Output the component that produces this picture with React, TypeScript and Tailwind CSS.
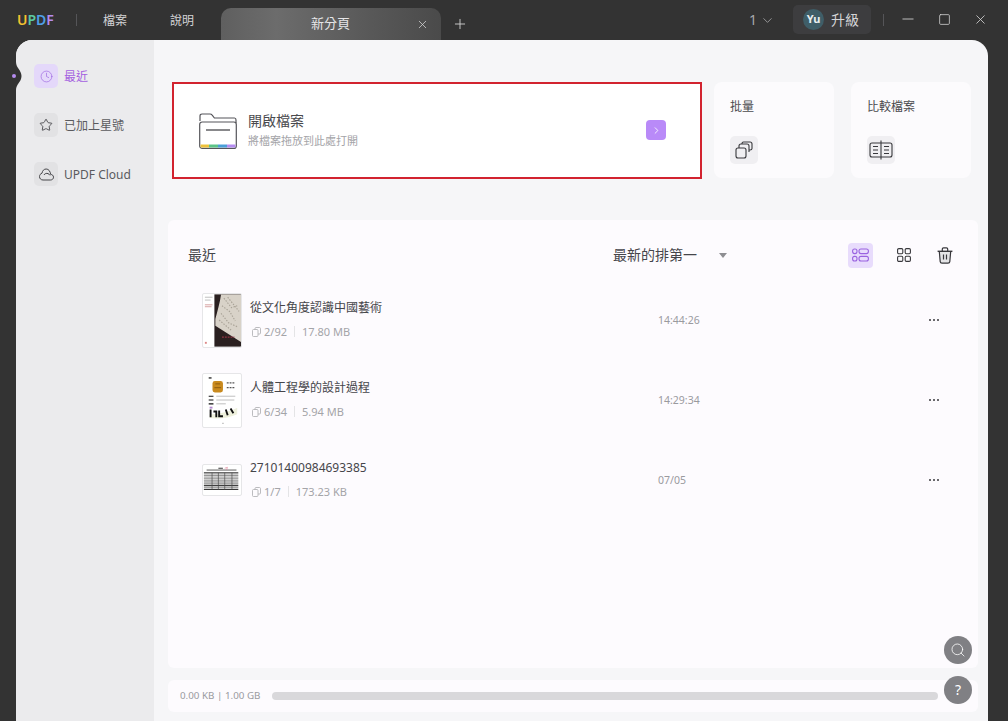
import React from "react";
import { Clock, Star, X, Plus, ChevronDown, Minus, Square, ChevronRight, Search } from "lucide-react";

const files = [
  { name: "從文化角度認識中國藝術", pages: "2/92", size: "17.80 MB", time: "14:44:26", thumb: "art" },
  { name: "人體工程學的設計過程", pages: "6/34", size: "5.94 MB", time: "14:29:34", thumb: "book" },
  { name: "27101400984693385", pages: "1/7", size: "173.23 KB", time: "07/05", thumb: "table" },
];

function ArtThumb() {
  return (
    <svg width="40" height="55" viewBox="0 0 40 55" className="rounded-[2px] border border-[#e6e6e8] bg-white">
      <rect x="12" y="0" width="28" height="55" fill="#2a2020" />
      <path d="M19 0H40V50L13 33V26C15 18 18 8 19 0Z" fill="#d8d2c8" />
      <path d="M22 4L30 14L36 12M20 12L28 18L34 28M26 3L38 18M19 20L27 30L36 34M17 27L30 38" stroke="#a8a296" strokeWidth="1.2" strokeDasharray="1.5 1.5" fill="none" />
      <path d="M20 45H33" stroke="#8e3340" strokeWidth="1.5" strokeDasharray="2 1" />
      <path d="M2 3H10M2 6H8" stroke="#aaa" strokeWidth="0.8" />
      <path d="M2 11H10M2 13H9" stroke="#c88" strokeWidth="0.8" />
      <rect x="2" y="50" width="2" height="2" fill="#d88" />
    </svg>
  );
}

function BookThumb() {
  return (
    <svg width="40" height="55" viewBox="0 0 40 55" className="rounded-[2px] border border-[#e6e6e8] bg-white">
      <rect x="6" y="3" width="3" height="1.5" fill="#333" />
      <rect x="10" y="7" width="11" height="12" rx="2.5" fill="#c98a1e" />
      <path d="M13 10H18M12 14H19" stroke="#8a5a10" strokeWidth="1" />
      <path d="M25 9H34M25 14H34" stroke="#555" strokeWidth="1.4" strokeDasharray="2 1" />
      <path d="M6 23H11M6 27H11M6 31H11" stroke="#111" strokeWidth="1.2" />
      <path d="M14 23H34M14 27H33M14 31H24" stroke="#aaa" strokeWidth="0.8" />
      <path d="M7 42C16 42 28 39 36 35V42C28 46 16 47 7 46Z" fill="#eef0dc" />
      <path d="M8 37V45M11 39H14V45M17 38V44H21M24 37L26 43M29 36L32 41" stroke="#111" strokeWidth="2" fill="none" />
      <rect x="7" y="34" width="3" height="2" fill="#b48ad0" />
      <rect x="20" y="51" width="2" height="1" fill="#bbb" />
    </svg>
  );
}

function TableThumb() {
  return (
    <svg width="42" height="32" viewBox="0 0 42 32" className="rounded-[2px] border border-[#e6e6e8] bg-white">
      <path d="M4 5H37" stroke="#222" strokeWidth="0.8" />
      <path d="M17 3H22" stroke="#222" strokeWidth="1" />
      <path d="M24 3L27 2L26 5" stroke="#e08aa0" strokeWidth="0.8" fill="none" />
      <rect x="1" y="8" width="38" height="19" fill="#cfcfcf" />
      <path d="M1 8H39M1 26.5H39M1 22H39" stroke="#111" strokeWidth="0.9" />
      <path d="M1 11H39M1 14H39M1 17H39M1 19.5H39M1 24H39" stroke="#666" strokeWidth="0.6" />
      <path d="M10 8V27M17 8V27M24 8V27M32 8V27" stroke="#444" strokeWidth="0.7" />
    </svg>
  );
}

function FolderIcon() {
  return (
    <svg width="38" height="36" viewBox="0 0 38 36" fill="none" stroke="#55555a" strokeWidth="1.2">
      <path d="M1 8V3C1 1.6 1.8 1 3 1H11C12 1 12.6 1.4 13.2 2.2L15.4 5H35.5C36.6 5 37 5.8 37 7V10" />
      <rect x="0.7" y="9" width="36.6" height="26.4" rx="2.5" />
      <path d="M7 17H31" stroke="#55555a" strokeWidth="1.4" />
      <path d="M1.5 33H10" stroke="#eec23c" strokeWidth="3" />
      <path d="M10 33H19" stroke="#5cc488" strokeWidth="3" />
      <path d="M19 33H28" stroke="#4a9fd8" strokeWidth="3" />
      <path d="M28 33H36.5" stroke="#b58cf0" strokeWidth="3" />
    </svg>
  );
}

function PagesIcon() {
  return (
    <svg width="9" height="10" viewBox="0 0 9 10" fill="none" stroke="#b4b4b8" strokeWidth="0.9">
      <rect x="0.5" y="2.5" width="5.5" height="7" rx="1" />
      <path d="M3 2.5V1.5C3 1 3.3.5 4 .5H7.5C8.1.5 8.5 1 8.5 1.5V6C8.5 6.7 8.1 7 7.5 7H6" />
    </svg>
  );
}

function CloudIcon() {
  return (
    <svg width="15" height="13" viewBox="0 0 15 13" fill="none" stroke="#444448" strokeWidth="1">
      <path d="M4 12H11.5C13.2 12 14.5 10.8 14.5 9.2C14.5 7.6 13.2 6.4 11.6 6.4C11.4 3.4 9.6 1 7.2 1C5 1 3.4 2.6 3 5.2C1.5 5.6.5 7 .5 8.6C.5 10.6 2 12 4 12Z" />
      <path d="M5 7C5.6 5.6 7.6 5 9 5.6C10 6 10.6 6.6 11 7.4" />
    </svg>
  );
}

export default function App() {
  return (
    <div
      className="flex h-[721px] w-[1008px] flex-col overflow-hidden bg-[#333333]"
      style={{ fontFamily: '"Noto Sans", "Noto Sans CJK TC", sans-serif' }}
    >
      {/* title bar */}
      <header className="flex h-10 shrink-0 items-start text-[#d4d4d6]">
        <div className="flex h-10 w-[76px] items-center pl-[17px] text-sm leading-none font-semibold">
          <span className="text-[#f2c230]">U</span>
          <span className="text-[#5cc8a0]">P</span>
          <span className="text-[#4f9fe6]">D</span>
          <span className="text-[#b58cf0]">F</span>
        </div>
        <div className="mt-[14px] h-3 w-px bg-[#555558]" />
        <span className="mt-[12px] ml-[26px] text-xs leading-[17px]">檔案</span>
        <span className="mt-[12px] ml-[43px] text-xs leading-[17px]">說明</span>
        <div className="mt-2 ml-[27px] flex h-8 w-[220px] items-center rounded-t-[10px] bg-linear-to-r from-[#5f5f5f] via-[#6c6c6c] via-25% to-[#4a4a4a]">
          <span className="ml-[90px] text-[13px] text-[#e6e6e8]">新分頁</span>
          <X size={13} strokeWidth={1.4} className="ml-[66px] text-[#d8d8d8]" />
        </div>
        <Plus size={16} strokeWidth={1.3} className="mt-4 ml-[11px] text-[#d8d8d8]" />
        <div className="ml-auto flex items-center">
          <span className="mt-[5px] text-sm text-[#a8a8aa]">1</span>
          <ChevronDown size={15} strokeWidth={1.3} className="mt-[6px] ml-[3px] text-[#a8a8aa]" />
          <div className="mt-[5px] ml-[18px] flex h-[29px] w-[78px] items-center rounded-[5px] bg-[#3d3d3f] pl-[10px]">
            <div className="flex h-[21px] w-[21px] items-center justify-center rounded-full bg-[#3f5e68] text-[11px] font-bold text-[#e8eef0]">
              Yu
            </div>
            <span className="ml-[7px] text-sm">升級</span>
          </div>
          <div className="mt-[5px] ml-3 h-3 w-px bg-[#555558]" />
          <Minus size={16} strokeWidth={1.2} className="mt-[4px] ml-[16px] scale-x-110 text-[#d8d8d8]" />
          <Square size={13} strokeWidth={1.4} className="mt-[4px] ml-[22px] text-[#d8d8d8]" />
          <X size={15} strokeWidth={1.3} className="mt-[4px] mr-5 ml-[22px] text-[#d8d8d8]" />
        </div>
      </header>

      {/* window body */}
      <div className="relative ml-4 flex min-h-0 w-[972px] flex-1 rounded-t-[16px] bg-[#f6f6f8]">
        <aside className="flex w-[138px] shrink-0 flex-col gap-[25px] rounded-tl-[16px] bg-[#ebebed] pt-6 pl-[18px] text-xs text-[#5a5a5e]">
          <div className="flex h-6 items-center gap-[6px] text-[#a45fe0]">
            <div className="flex h-6 w-6 items-center justify-center rounded-[5px] bg-[#e4d8fa]">
              <Clock size={13} strokeWidth={1.2} className="text-[#9a63e0]" />
            </div>
            <span className="mt-[2px]">最近</span>
          </div>
          <div className="flex h-6 items-center gap-[6px]">
            <div className="flex h-6 w-6 items-center justify-center rounded-[5px] bg-[#e2e2e4]">
              <Star size={14} strokeWidth={1.5} className="text-[#444448]" />
            </div>
            <span className="mt-[2px]">已加上星號</span>
          </div>
          <div className="flex h-6 items-center gap-[6px]">
            <div className="flex h-6 w-6 items-center justify-center rounded-[5px] bg-[#e2e2e4]">
              <CloudIcon />
            </div>
            <span className="mt-[2px]">UPDF Cloud</span>
          </div>
        </aside>

        {/* active marker notch */}
        <svg width="6" height="28" viewBox="0 0 6 28" className="absolute top-[22px] left-0">
          <path d="M0 0C0 6 5.5 8 5.5 14C5.5 20 0 22 0 28Z" fill="#333333" />
        </svg>
        <div className="absolute top-[34px] left-[-4px] h-1 w-1 rounded-full bg-[#b58cf0]" />

        <main className="relative flex min-w-0 flex-1 flex-col pt-[42px] pr-[10px] pl-[14px]">
          <div className="ml-1 flex h-[97px] items-start">
            <div className="flex h-[97px] w-[530px] items-center border-2 border-[#d2232f] bg-white pr-[34px] pl-[25px]">
              <FolderIcon />
              <div className="ml-[11px] flex flex-col">
                <span className="text-sm leading-[20px] text-[#4a4a4e]">開啟檔案</span>
                <span className="text-[11px] leading-[20px] text-[#a4a4a8]">將檔案拖放到此處打開</span>
              </div>
              <div className="-mt-[1px] ml-auto flex h-5 w-5 items-center justify-center rounded-[4px] bg-[#b98af8]">
                <ChevronRight size={11} strokeWidth={1.8} className="text-white" />
              </div>
            </div>
            <div className="ml-3 flex h-[96px] w-[120px] flex-col rounded-[8px] bg-[#fcfbfd] pt-4 pl-4 text-xs text-[#4a4a4e]">
              <span className="leading-[17px]">批量</span>
              <div className="mt-[21px] flex h-7 w-7 items-center justify-center rounded-[5px] bg-[#f0eff2]">
                <svg width="18" height="18" viewBox="0 0 18 18" fill="none" stroke="#38383c" strokeWidth="1.1">
                  <rect x="1" y="7" width="10" height="10" rx="2" />
                  <path d="M4 7V5C4 3.8 4.8 3 6 3H12C13.2 3 14 3.8 14 5V11" />
                  <path d="M7 3V2.5C7 1.5 7.6 1 8.5 1H15C16.2 1 17 1.7 17 3V7.5C17 8.6 16.2 9 15 9H14" />
                </svg>
              </div>
            </div>
            <div className="ml-[17px] flex h-[96px] w-[120px] flex-col rounded-[8px] bg-[#fcfbfd] pt-4 pl-4 text-xs text-[#4a4a4e]">
              <span className="leading-[17px]">比較檔案</span>
              <div className="mt-[21px] flex h-7 w-7 items-center justify-center rounded-[5px] bg-[#f0eff2]">
                <svg width="24" height="20" viewBox="0 0 24 20" fill="none" stroke="#38383c" strokeWidth="1.1">
                  <path d="M12 3H3C1.8 3 1 3.7 1 5V15C1 16.2 1.8 17 3 17H12" />
                  <path d="M12 3H21C22.2 3 23 3.7 23 5V15C23 16.2 22.2 17 21 17H12" />
                  <path d="M12 .5V19.5" />
                  <path d="M4 6.5H9M4 10H9M4 13.5H9M15 6.5H20M15 10H20M15 13.5H20" />
                </svg>
              </div>
            </div>
          </div>

          <section className="mt-[41px] flex h-[448px] flex-col rounded-[6px] bg-[#fdfbfe]">
            <div className="flex h-[60px] items-center pt-[10px] pl-5">
              <span className="w-[425px] text-sm text-[#45454a]">最近</span>
              <span className="w-[106px] text-sm text-[#45454a]">最新的排第一</span>
              <div className="h-0 w-0 border-x-[4px] border-t-[5px] border-x-transparent border-t-[#8e8e92]" />
              <div className="ml-[121px] flex h-[25px] w-[25px] items-center justify-center rounded-[4px] bg-[#e8dcfc]">
                <svg width="17" height="14" viewBox="0 0 17 14" fill="none" stroke="#9a63e0" strokeWidth="1.1">
                  <rect x="0.6" y="1" width="4.4" height="4.6" rx="2" />
                  <rect x="0.6" y="8.4" width="4.4" height="4.6" rx="2" />
                  <rect x="7" y="1" width="9.4" height="4.6" rx="2" />
                  <rect x="7" y="8.4" width="9.4" height="4.6" rx="2" />
                </svg>
              </div>
              <svg width="14" height="14" viewBox="0 0 14 14" fill="none" stroke="#38383c" strokeWidth="1.1" className="ml-6">
                <rect x="0.6" y="0.6" width="5.2" height="5.2" rx="1.2" />
                <rect x="8.2" y="0.6" width="5.2" height="5.2" rx="1.2" />
                <rect x="0.6" y="8.2" width="5.2" height="5.2" rx="1.2" />
                <rect x="8.2" y="8.2" width="5.2" height="5.2" rx="1.2" />
              </svg>
              <svg width="16" height="17" viewBox="0 0 16 17" fill="none" stroke="#38383c" strokeWidth="1.2" className="ml-[26px]">
                <path d="M2.3 4.5L3.2 14.6C3.3 15.6 4 16.2 5 16.2H11C12 16.2 12.7 15.6 12.8 14.6L13.7 4.5Z" fill="#e4e4e6" />
                <path d="M.6 4.3H15.4" strokeWidth="1.4" />
                <path d="M5.3 4V2C5.3 1.2 5.8.8 6.5.8H9.5C10.2.8 10.7 1.2 10.7 2V4" />
                <path d="M6.5 7.5V12.5M9.5 7.5V12.5" />
              </svg>
            </div>

            {files.map((f) => (
              <div key={f.name} className="flex h-20 items-center pr-9 pl-[34px]">
                <div className="flex w-10 shrink-0 justify-center">
                  {f.thumb === "art" && <ArtThumb />}
                  {f.thumb === "book" && <BookThumb />}
                  {f.thumb === "table" && <TableThumb />}
                </div>
                <div className="ml-2 flex w-[408px] flex-col gap-[7px] pb-[2px]">
                  <span className="text-xs leading-[18px] text-[#45454a]">{f.name}</span>
                  <div className="flex items-center pl-[2px] text-[11px] leading-[16px] text-[#a4a4a8]">
                    <PagesIcon />
                    <span className="ml-[3px]">{f.pages}</span>
                    <div className="mx-[7px] h-[11px] w-px bg-[#e4e4e6]" />
                    <span>{f.size}</span>
                  </div>
                </div>
                <span className="mt-[2px] text-[10.5px] text-[#9a9a9e]">{f.time}</span>
                <div className="ml-auto flex h-4 w-4 items-center justify-center gap-[2px]">
                  <span className="h-[2px] w-[2px] rounded-full bg-[#38383c]" />
                  <span className="h-[2px] w-[2px] rounded-full bg-[#38383c]" />
                  <span className="h-[2px] w-[2px] rounded-full bg-[#38383c]" />
                </div>
              </div>
            ))}
          </section>

          <div className="mt-3 flex h-8 items-center rounded-[6px] bg-[#fdfbfe] pr-10 pl-3">
            <span className="text-[9.8px] whitespace-nowrap text-[#9a9a9e]">0.00 KB | 1.00 GB</span>
            <div className="ml-3 h-2 flex-1 rounded-full bg-[#d9d8db]" />
          </div>

          {/* floating buttons */}
          <div className="absolute top-[596px] left-[790px] flex h-7 w-7 items-center justify-center rounded-full bg-[#808084]">
            <Search size={16} strokeWidth={1.2} className="text-white" />
          </div>
          <div className="absolute top-[636px] left-[790px] flex h-7 w-7 items-center justify-center rounded-full bg-[#808084] text-sm text-white">
            ?
          </div>
        </main>
      </div>
    </div>
  );
}
